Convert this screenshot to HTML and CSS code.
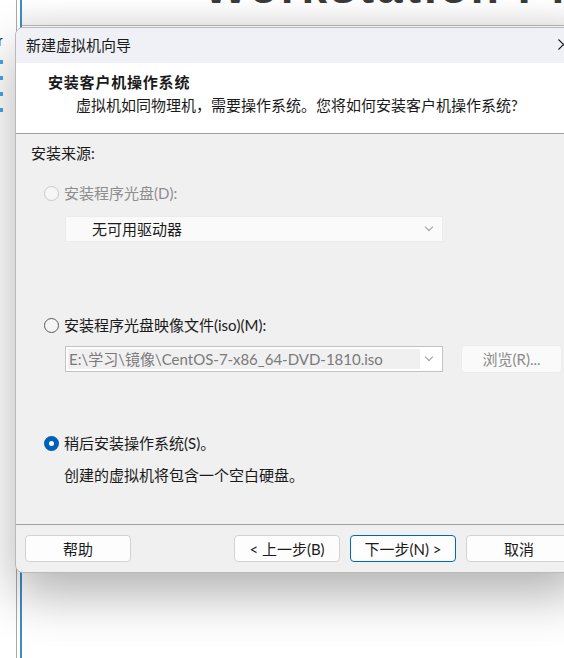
FILE: index.html
```html
<!DOCTYPE html>
<html lang="zh-CN">
<head>
    <meta charset="UTF-8">
    <title>新建虚拟机向导</title>
    <link rel="stylesheet" href="styles.css">
</head>
<body>

    <!-- окно VMware позади мастера -->
    <div class="desk">
        <div class="side">
            <span class="side-r">r</span>
            <span class="dot"></span>
            <span class="dot"></span>
            <span class="dot"></span>
            <span class="dot"></span>
        </div>
        <div class="backwin">
            <div class="pane">
                <div class="banner"><span class="banner-text">Workstation Pro</span></div>
                <div class="canvas"></div>
            </div>
        </div>
    </div>

    <div class="wizard">
        <div class="titlebar">
            <span>新建虚拟机向导</span>
            <svg class="close" width="11" height="11" viewBox="0 0 11 11">
                <path d="M0.5 0.5 L10.5 10.5 M10.5 0.5 L0.5 10.5" stroke="#1b1b1b" stroke-width="1.1" fill="none"/>
            </svg>
        </div>

        <div class="header">
            <div class="header-title">安装客户机操作系统</div>
            <div class="header-sub">虚拟机如同物理机，需要操作系统。您将如何安装客户机操作系统?</div>
        </div>

        <div class="content">
            <div class="group-label">安装来源:</div>

            <div class="option disabled">
                <span class="radio"></span>
                <span>安装程序光盘(D):</span>
            </div>
            <div class="combo combo-drive">
                <span class="combo-text">无可用驱动器</span>
                <span class="chevron"></span>
            </div>

            <div class="option option-iso">
                <span class="radio"></span>
                <span>安装程序光盘映像文件(iso)(M):</span>
            </div>
            <div class="iso-row">
                <div class="combo combo-iso">
                    <span class="combo-field">E:\学习\镜像\CentOS-7-x86_64-DVD-1810.iso</span>
                    <span class="chevron"></span>
                </div>
                <button class="btn btn-browse">浏览(R)...</button>
            </div>

            <div class="option option-later">
                <span class="radio checked"></span>
                <span>稍后安装操作系统(S)。</span>
            </div>
            <div class="note">创建的虚拟机将包含一个空白硬盘。</div>
        </div>

        <div class="footer">
            <button class="btn">帮助</button>
            <div class="nav">
                <button class="btn">&lt; 上一步(B)</button>
                <button class="btn btn-default">下一步(N) &gt;</button>
                <button class="btn">取消</button>
            </div>
        </div>
    </div>

</body>
</html>
```

FILE: styles.css
```css
body {
    margin: 0;
    width: 564px;
    height: 658px;
    overflow: hidden;
    position: relative;
    background-color: #ffffff;
    font-family: Lato, "Noto Sans CJK SC", sans-serif;
    font-size: 15px;
    color: #1a1a1a;
}

/* фон: окно за диалогом */
.desk {
    display: flex;
    height: 658px;
}

.side {
    width: 16px;
    flex: none;
    display: flex;
    flex-direction: column;
    align-items: flex-start;
    padding-top: 34px;
    gap: 12px;
    box-sizing: border-box;
}

.side-r {
    font-family: "Liberation Sans", sans-serif;
    font-size: 14px;
    line-height: 14px;
    margin-left: -2px;
    color: #222;
}

.dot {
    width: 3px;
    height: 4px;
    background-color: #4ba3e6;
}

.backwin {
    flex: 1;
    min-width: 0;
    border-left: 1px solid #a9a9a9;
    padding-left: 3px;
    display: flex;
}

.pane {
    flex: 1;
    min-width: 0;
    border-left: 2px solid #3d8cc4;
    display: flex;
    flex-direction: column;
}

.banner {
    height: 25px;
    overflow: hidden;
    border-bottom: 1px solid #b4b4b4;
    background: linear-gradient(#ffffff, #f1f1f1);
    padding-left: 182px;
}

.banner-text {
    display: block;
    margin-top: -36px;
    font-family: "Liberation Sans", sans-serif;
    font-size: 46px;
    line-height: 46px;
    font-weight: bold;
    letter-spacing: 3px;
    color: #3a3a3a;
    white-space: nowrap;
}

.canvas {
    flex: 1;
    background-color: #ffffff;
}

/* диалог мастера */
.wizard {
    position: absolute;
    left: 15px;
    top: 27px;
    width: 566px;
    border: 1px solid #b9b9b9;
    border-radius: 8px;
    overflow: hidden;
    background-color: #f0f0f0;
    box-shadow: 0 22px 50px rgba(0, 0, 0, 0.3);
}

.titlebar {
    height: 35px;
    display: flex;
    align-items: center;
    justify-content: space-between;
    padding: 0 13px 3px 10px;
    box-sizing: border-box;
    background-color: #eff1f7;
}

.close {
    margin-top: 1px;
}

.header {
    height: 71px;
    background-color: #ffffff;
    border-bottom: 1px solid #a0a0a0;
    padding: 9px 0 0 32px;
    box-sizing: border-box;
    line-height: 20px;
}

.header-title {
    font-weight: bold;
    letter-spacing: 0.8px;
}

.header-sub {
    margin-top: 3px;
    padding-left: 28px;
}

.content {
    height: 391px;
    box-sizing: border-box;
    padding: 9px 0 0 15px;
    border-bottom: 1px solid #a0a0a0;
    line-height: 20px;
}

.option {
    display: flex;
    align-items: center;
    gap: 5px;
    margin-left: 13px;
}

.option.disabled {
    margin-top: 20px;
    color: #8d8d8d;
}

.option-iso {
    margin-top: 73px;
}

.option-later {
    margin-top: 60px;
}

.radio {
    width: 13px;
    height: 13px;
    border-radius: 50%;
    border: 1px solid #5b5b5b;
    background-color: #f5f5f5;
    flex: none;
}

.disabled .radio {
    border-color: #c9c9c9;
    background-color: #f6f6f6;
}

.radio.checked {
    width: 5px;
    height: 5px;
    border: 5px solid #005fb8;
    background-color: #ffffff;
}

.combo {
    width: 378px;
    height: 26px;
    box-sizing: border-box;
    display: flex;
    align-items: center;
    justify-content: space-between;
    margin-left: 34px;
}

.combo-drive {
    margin-top: 13px;
    background-color: #fafafa;
    border: 1px solid #ececec;
    padding: 0 10px 0 26px;
}

.iso-row {
    display: flex;
    align-items: center;
    gap: 18px;
    margin-top: 10px;
    margin-left: 34px;
}

.combo-iso {
    margin-left: 0;
    height: 26px;
    border: 1px solid #c3c3c3;
    background-color: #ffffff;
    padding: 2px 10px 2px 2px;
}

.combo-field {
    flex: 1;
    height: 20px;
    background-color: #f0f0f0;
    color: #7a7a7a;
    padding-left: 1px;
    margin-right: 6px;
    white-space: nowrap;
}

.chevron {
    width: 5px;
    height: 5px;
    border-right: 1px solid #9a9a9a;
    border-bottom: 1px solid #9a9a9a;
    transform: rotate(45deg);
    margin-top: -4px;
    flex: none;
}

.note {
    margin: 12px 0 0 33px;
}

.footer {
    height: 47px;
    display: flex;
    align-items: center;
    justify-content: space-between;
    padding: 0 10px 0 9px;
}

.nav {
    display: flex;
    gap: 10px;
}

.btn {
    width: 106px;
    height: 27px;
    box-sizing: border-box;
    border: 1px solid #d2d2d2;
    border-radius: 4px;
    background-color: #fdfdfd;
    font-family: Lato, "Noto Sans CJK SC", sans-serif;
    font-size: 15px;
    line-height: 20px;
    color: #1a1a1a;
    padding: 0;
}

.btn-default {
    border-color: #0067c0;
}

.btn-browse {
    width: 101px;
    height: 28px;
    border-color: #ececec;
    background-color: #fafafa;
    color: #8a8a8a;
}
```
